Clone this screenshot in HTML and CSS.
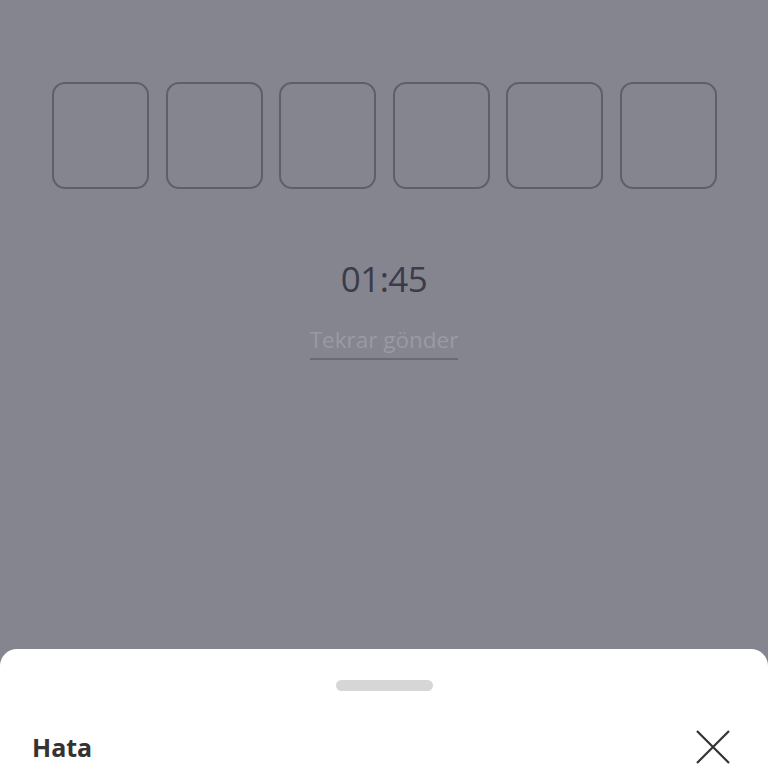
FILE: index.html
```html
<!DOCTYPE html>
<html lang="tr">
<head>
<meta charset="utf-8">
<link rel="stylesheet" href="styles.css">
</head>
<body>
<div class="screen">
  <div class="content">
    <div class="code-row">
      <div class="code-box"></div>
      <div class="code-box"></div>
      <div class="code-box"></div>
      <div class="code-box"></div>
      <div class="code-box"></div>
      <div class="code-box"></div>
    </div>
    <div class="timer">01:45</div>
    <div class="resend">Tekrar gönder</div>
  </div>
  <div class="sheet">
    <div class="handle"></div>
    <div class="sheet-head">
      <div class="sheet-title">Hata</div>
      <svg class="close" width="34" height="34" viewBox="0 0 34 34">
        <path d="M1 1 L33 33 M33 1 L1 33" stroke="#333333" stroke-width="2.2" fill="none"/>
      </svg>
    </div>
  </div>
</div>
</body>
</html>
```

FILE: styles.css
```css
html, body {
  margin: 0;
  padding: 0;
  width: 768px;
  height: 768px;
  overflow: hidden;
  background: #858590;
  font-family: "Open Sans", "Noto Sans", sans-serif;
}
.screen {
  width: 768px;
  height: 768px;
  display: flex;
  flex-direction: column;
}
.content {
  flex: 1;
  display: flex;
  flex-direction: column;
  align-items: center;
  padding-top: 82px;
}
.code-row {
  display: flex;
  gap: 16.6px;
  margin-left: 1px;
}
.code-box {
  width: 93px;
  height: 103px;
  border: 2px solid #5f5f6b;
  border-radius: 13px;
}
.timer {
  margin-top: 65px;
  font-size: 35px;
  line-height: 50px;
  color: #3b3b4a;
  letter-spacing: -0.5px;
}
.resend {
  margin-top: 20px;
  font-size: 22.5px;
  line-height: 32px;
  color: #999aa4;
  padding-bottom: 2px;
  border-bottom: 2px solid #6b6b77;
}
.sheet {
  height: 119px;
  background: #ffffff;
  border-radius: 17px 17px 0 0;
  display: flex;
  flex-direction: column;
  align-items: center;
}
.handle {
  margin-top: 31px;
  width: 97px;
  height: 11px;
  border-radius: 6px;
  background: #d6d6d6;
}
.sheet-head {
  align-self: stretch;
  display: flex;
  justify-content: space-between;
  align-items: center;
  padding: 0 38px 0 32px;
  margin-top: 38px;
}
.sheet-title {
  font-size: 25px;
  font-weight: 700;
  color: #333333;
  line-height: 36px;
}
.close {
  display: block;
}
```
